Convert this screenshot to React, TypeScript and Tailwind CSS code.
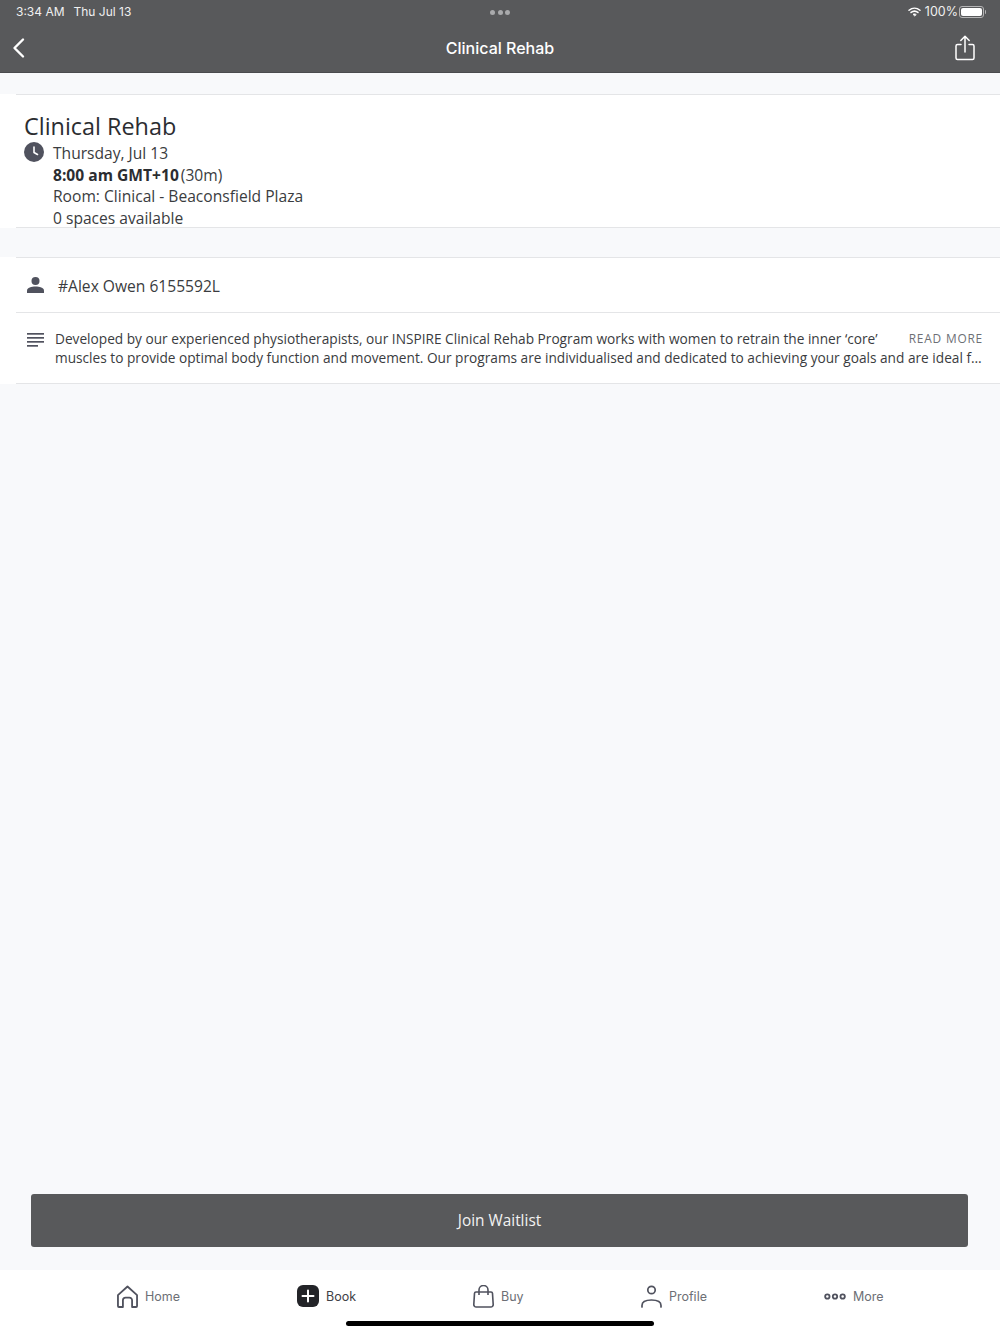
import React from "react";

function Tab({ icon, label, active, className }: { icon: React.ReactNode; label: string; active?: boolean; className?: string }) {
  return (
    <div className={"flex items-center gap-[7px] " + (className ?? "")}>
      {icon}
      <span className={"mt-[2px] text-[12.5px] leading-[18px] " + (active ? "text-[#3f4146]" : "text-[#6d6f75]")}>{label}</span>
    </div>
  );
}

export default function App() {
  return (
    <div className="relative flex h-[1334px] w-[1000px] flex-col overflow-hidden bg-[#f8f9fb] font-['Open_Sans',sans-serif]">
      {/* Header */}
      <header className="h-[73px] shrink-0 border-b border-[#4a4b4e] bg-[#58595b] text-white font-['Inter',sans-serif]">
        <div className="flex h-[24px] items-center justify-between pl-[16px] pr-[14px] text-[12px] text-[#f0f0f0]">
          <div className="flex w-[200px] gap-[9px]">
            <span>3:34 AM</span>
            <span>Thu Jul 13</span>
          </div>
          <div className="mr-[2px] flex gap-[2.5px]">
            <span className="h-[5px] w-[5px] rounded-full bg-[#a9aaac]" />
            <span className="h-[5px] w-[5px] rounded-full bg-[#a9aaac]" />
            <span className="h-[5px] w-[5px] rounded-full bg-[#a9aaac]" />
          </div>
          <div className="flex w-[200px] items-center justify-end">
            <svg width="13" height="10" viewBox="0 0 14 11" fill="none" stroke="#fff" strokeWidth="1.7" strokeLinecap="round">
              <path d="M1 3.6C4.6.6 9.4.6 13 3.6" />
              <path d="M3.2 6C5.500 4.200 8.500 4.200 10.800 6" />
              <path d="M7 9.600l-1.600-1.500c1-.7 2.200-.7 3.200 0z" fill="#fff" strokeWidth="1" />
            </svg>
            <span className="ml-[4px] text-[12.5px]">100%</span>
            <div className="ml-[1px] flex items-center">
              <div className="h-[12px] w-[25px] rounded-[3px] border border-[#b5b5b6] p-[1px]">
                <div className="h-full w-full rounded-[2px] bg-white" />
              </div>
              <div className="ml-[1px] h-[4px] w-[1px] rounded-r bg-[#b5b5b6]" />
            </div>
          </div>
        </div>
        <div className="flex h-[48px] items-center px-[10px]">
          <div className="flex-1">
            <svg width="18" height="22" viewBox="0 0 18 22" fill="none" stroke="#fff" strokeWidth="2.4" strokeLinecap="round" strokeLinejoin="round">
              <path d="M13 2.500 4.500 11l8.500 8.500" />
            </svg>
          </div>
          <span className="text-[16px] font-medium">Clinical Rehab</span>
          <div className="flex flex-1 justify-end">
            <svg className="mr-[15px]" width="20" height="26" viewBox="0 0 20 26" fill="none" stroke="#fff" strokeWidth="1.500" strokeLinecap="round" strokeLinejoin="round">
              <path d="M6 9.500H2.500a1.500 1.500 0 0 0-1.500 1.500v12a1.500 1.500 0 0 0 1.500 1.500h15a1.500 1.500 0 0 0 1.500-1.500V11a1.500 1.500 0 0 0-1.500-1.500H14" />
              <path d="M10 17V1.500M5.800 5.500 10 1.300l4.200 4.200" />
            </svg>
          </div>
        </div>
      </header>

      {/* Details card */}
      <section className="mt-[21px] h-[134px] shrink-0 bg-white pl-[16px]">
        <div className="h-full border-y border-[#e4e5e7] pl-[8px] pt-[15px]">
          <h1 className="text-[23.4px] leading-[33px] text-[#2b2d31]">Clinical Rehab</h1>
          <div className="flex">
            <svg className="-mt-px shrink-0" width="20" height="20" viewBox="0 0 20 20">
              <circle cx="10" cy="10" r="10" fill="#50525e" />
              <path d="M10 5v5.500l3.500 2" fill="none" stroke="#fff" strokeWidth="1.600" strokeLinecap="round" strokeLinejoin="round" />
            </svg>
            <div className="ml-[9px] text-[15.6px] leading-[21.700px] text-[#3a3c40]">
              <div>Thursday, Jul 13</div>
              <div>
                <span className="font-bold text-[#2b2d31]">8:00 am GMT+10</span>
                <span className="ml-[2px]">(30m)</span>
              </div>
              <div>Room: Clinical - Beaconsfield Plaza</div>
              <div>0 spaces available</div>
            </div>
          </div>
        </div>
      </section>

      {/* Info card */}
      <section className="mt-[29px] h-[127px] shrink-0 bg-white pl-[16px]">
        <div className="flex h-[56px] items-center border-y border-[#e4e5e7] pl-[11px]">
          <svg width="17" height="16" viewBox="0 0 17 16" fill="#50525e">
            <circle cx="8.500" cy="4" r="4" />
            <path d="M0 16v-2.500C0 10.800 4.500 9.500 8.500 9.500s8.500 1.300 8.500 4V16z" />
          </svg>
          <span className="ml-[14px] mt-[4px] text-[15.6px] text-[#3a3c40]">#Alex Owen 6155592L</span>
        </div>
        <div className="flex h-[71px] border-b border-[#e4e5e7] pl-[11px] pr-[17px] pt-[16px]">
          <svg className="mt-[4px] shrink-0" width="17" height="15" viewBox="0 0 17 15" fill="#50525e">
            <rect width="17" height="1.700" y="0" />
            <rect width="17" height="1.700" y="4" />
            <rect width="17" height="1.700" y="8" />
            <rect width="11" height="1.700" y="12" />
          </svg>
          <div className="ml-[11px] min-w-0 flex-1 text-[13.68px] leading-[19px] text-[#3a3c40]">
            <div className="flex justify-between">
              <span className="whitespace-nowrap">Developed by our experienced physiotherapists, our INSPIRE Clinical Rehab Program works with women to retrain the inner ‘core’</span>
              <span className="whitespace-nowrap text-[11.9px] tracking-[0.8px] text-[#6d6f75]">READ MORE</span>
            </div>
            <div className="truncate">muscles to provide optimal body function and movement. Our programs are individualised and dedicated to achieving your goals and are ideal for women at all stages of life.</div>
          </div>
        </div>
      </section>

      <div className="flex-1" />

      {/* Button */}
      <div className="shrink-0 pb-[23px] pl-[31px] pr-[32px]">
        <button className="flex h-[53px] w-full items-center justify-center rounded-[3px] bg-[#58595b] text-[15.4px] text-[#f2f2f2]">Join Waitlist</button>
      </div>

      {/* Tabs */}
      <nav className="h-[64px] shrink-0 bg-white font-['Inter',sans-serif]">
        <div className="grid h-[52px] grid-cols-5 items-center px-[60px]">
          <Tab
            className="pl-[57px]"
            label="Home"
            icon={
              <svg width="21" height="23" viewBox="0 0 22 24" fill="none" stroke="#50525e" strokeWidth="1.900" strokeLinejoin="round">
                <path d="M1 10.500 11 1.500l10 9v11.500a1 1 0 0 1-1 1h-4.200v-7a2.800 2.800 0 0 0-2.800-2.800H9a2.800 2.800 0 0 0-2.800 2.800v7H2a1 1 0 0 1-1-1z" />
              </svg>
            }
          />
          <Tab
            className="pl-[61px]"
            label="Book"
            active
            icon={
              <svg width="22" height="22" viewBox="0 0 22 22">
                <rect width="22" height="22" rx="6" fill="#232428" />
                <path d="M11 5.500v11M5.500 11h11" stroke="#fff" strokeWidth="2" strokeLinecap="round" />
              </svg>
            }
          />
          <Tab
            className="pl-[61px]"
            label="Buy"
            icon={
              <svg width="21" height="23" viewBox="0 0 21 23" fill="none" stroke="#50525e" strokeWidth="1.600" strokeLinejoin="round">
                <path d="M3 7h15a1.500 1.500 0 0 1 1.500 1.400l.7 11a2.400 2.400 0 0 1-2.400 2.600H3.200A2.400 2.400 0 0 1 .8 19.400l.7-11A1.500 1.500 0 0 1 3 7z" />
                <path d="M6 10V5a4.500 4.500 0 0 1 9 0v5" />
              </svg>
            }
          />
          <Tab
            className="pl-[53px]"
            label="Profile"
            icon={
              <svg width="21" height="23" viewBox="0 0 21 23" fill="none" stroke="#50525e" strokeWidth="1.700" strokeLinecap="round">
                <circle cx="10.500" cy="5" r="3.700" />
                <path d="M1 22v-1.500c0-3.500 4-5.500 9.500-5.500s9.500 2 9.500 5.500V22" />
              </svg>
            }
          />
          <Tab
            className="pl-[60px]"
            label="More"
            icon={
              <svg width="22" height="7" viewBox="0 0 23 7" fill="none" stroke="#50525e" strokeWidth="1.900">
                <circle cx="3.500" cy="3.500" r="2.300" />
                <circle cx="11.500" cy="3.500" r="2.300" />
                <circle cx="19.500" cy="3.500" r="2.300" />
              </svg>
            }
          />
        </div>
      </nav>

      {/* Home indicator */}
      <div className="absolute bottom-[8px] left-[346px] h-[5px] w-[308px] rounded-full bg-black" />
    </div>
  );
}
